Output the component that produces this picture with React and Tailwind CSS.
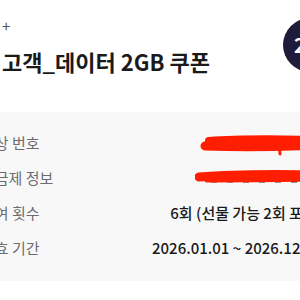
import React from "react";

const font = { fontFamily: '"Noto Sans CJK KR", "Noto Sans", sans-serif' };

const rows = [
  { label: "대상 번호", scribble: 1 },
  { label: "요금제 정보", scribble: 2 },
  { label: "부여 횟수", value: "6회 (선물 가능 2회 포함)" },
  { label: "유효 기간", value: "2026.01.01 ~ 2026.12.31" },
];

const Scribble = ({ kind }) => (
  <svg width="127" height="35" viewBox="0 0 127 35" className="shrink-0">
    {kind === 1 ? (
      <g stroke="#ff1e00" strokeLinecap="round" fill="none">
        <path d="M14 15 C40 13 80 13 124 14" strokeWidth="8" />
        <path d="M10 20 C40 21 80 21 124 19" strokeWidth="9" />
        <path d="M84 12 L85 28" strokeWidth="3" />
      </g>
    ) : (
      <g>
        <path d="M16 20 L120 20" stroke="#3a2a2a" strokeWidth="3" strokeDasharray="6 10" />
        <g stroke="#ff1e00" strokeLinecap="round" fill="none">
          <path d="M4 16 C40 13 80 13 124 14" strokeWidth="9" />
          <path d="M12 19 C40 19 80 19 124 18" strokeWidth="5" />
        </g>
      </g>
    )}
  </svg>
);

export default function App() {
  return (
    <div className="w-[300px] h-[300px] overflow-hidden bg-white" style={font}>
      {/* header */}
      <div className="flex w-[360px] pl-[2px]">
        <div className="w-[281px] shrink-0 pt-[18px]">
          <div className="text-[15px] leading-[16px] text-[#555]">+</div>
          <div className="mt-[14px] text-[22px] leading-[26px] font-bold text-[#1a1a1a] whitespace-nowrap">
            고객_데이터 2GB 쿠폰
          </div>
        </div>
        <div className="mt-[18px] w-[54px] h-[54px] shrink-0 rounded-full bg-[#1e1b3b] flex items-center pl-[11px] text-white text-[20px] font-bold">
          2
        </div>
      </div>

      {/* info panel */}
      <div className="mt-[38px] h-[169px] w-[360px] bg-[#f8f8f8] py-[14px]">
        <div className="ml-[-19px] w-[341px] flex flex-col">
          {rows.map((r) => (
            <div key={r.label} className="h-[35px] flex items-center justify-between whitespace-nowrap">
              <span className="text-[15px] text-[#6b6b70]">{r.label}</span>
              {r.value ? (
                <span className="text-[15px] font-medium text-[#1a1a1a]">{r.value}</span>
              ) : (
                <Scribble kind={r.scribble} />
              )}
            </div>
          ))}
        </div>
      </div>
    </div>
  );
}
